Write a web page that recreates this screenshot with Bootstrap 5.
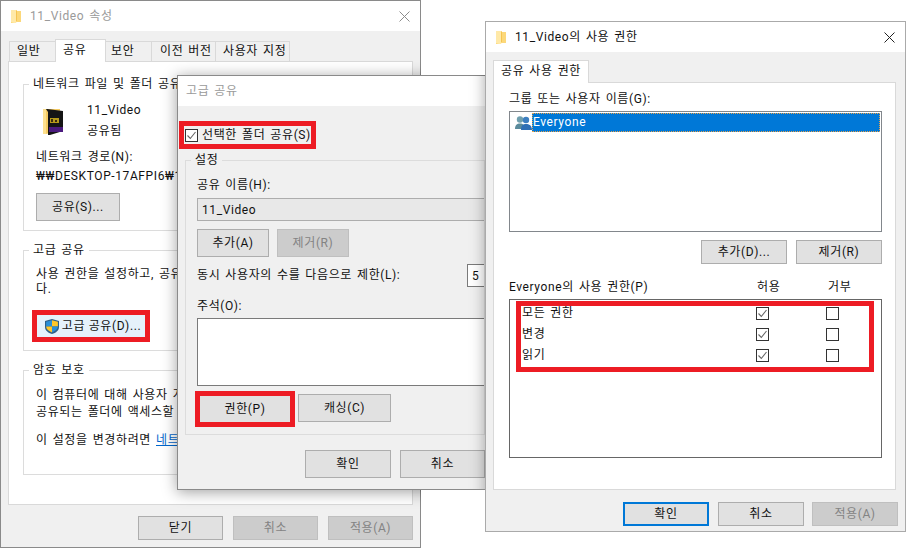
<!DOCTYPE html>
<html lang="ko">
<head>
<meta charset="utf-8">
<title>11_Video</title>
<link href="https://cdn.jsdelivr.net/npm/bootstrap@5.3.0/dist/css/bootstrap.min.css" rel="stylesheet">
<style>
html,body{margin:0;height:549px;overflow:hidden;background:#fff}
body{font-family:Roboto,"Noto Sans CJK KR",sans-serif;font-size:12px;line-height:17px;color:#111;letter-spacing:.6px;word-spacing:1.5px}
.canvas{position:relative;width:906px;height:549px;overflow:hidden}
.win{position:absolute;background:#f0f0f0;border:1px solid #8a8a8a;box-sizing:border-box}
.win-a{left:0;top:0;width:421px;height:548px;z-index:1}
.win-b{left:177px;top:75px;width:320px;height:415px;z-index:2;box-shadow:0 2px 14px rgba(0,0,0,.38);clip-path:polygon(-24px -24px,244px -24px,244px 0,100% 0,100% 100%,244px 100%,244px calc(100% + 24px),-24px calc(100% + 24px))}
.win-c{left:485px;top:21px;width:421px;height:511px;z-index:3;border-color:#aaa;box-shadow:0 0 14px rgba(0,0,0,.34);clip-path:polygon(0 0,100% 0,100% 100%,0 100%,0 468px,-24px 468px,-24px 54px,0 54px)}
.win-title{height:30px;background:#fff;padding-left:10px;color:#9a9a9a;white-space:nowrap}
.win-c .win-title{color:#111;height:30px}
.title-txt{margin-left:9px}
.win-b .title-txt{margin-left:-2px}
.win-x{margin-left:auto;margin-right:10px}
.tab-row{border-bottom:0;padding-left:9px;margin-top:8px;height:22px;flex-wrap:nowrap;align-items:flex-end}
.tab-row .nav-link{border:1px solid #d9d9d9;border-bottom:0;border-radius:0;margin:0;padding:0;height:20px;line-height:18px;color:#111;background:#f0f0f0;text-align:left;white-space:nowrap;margin-left:-1px}
.tab-row .nav-link.active{height:23px;line-height:20px;background:#fff;color:#111;border-color:#d9d9d9;position:relative;z-index:1;margin-bottom:-1px}
.tab-row .tw-a{width:47px;padding-left:7px}.tab-row .tw-b{width:51px;padding-left:7px}.tab-row .tw-c{width:47px;padding-left:5px}.tab-row .tw-d{width:65px;padding-left:8px}.tab-row .tw-e{width:75px;padding-left:7px}.tab-row .tw-f{width:96px;padding-left:7px}
.sheet{background:#fff;border:1px solid #d9d9d9;box-sizing:border-box}
.win-a .sheet{margin-left:7px;width:405px;height:444px;padding:14px 14px 0}
.win-c .sheet{margin:0 0 0 7px;width:403px;height:408px;padding:8px 13px 0 15px}
.grp{border:1px solid #dcdcdc;margin:0;padding:0 12px;min-width:0;overflow:hidden;white-space:nowrap;box-sizing:border-box}
.grp legend{float:none;width:auto;font-size:12px;line-height:17px;margin:0 0 0 -7px;padding:0 4px;letter-spacing:.6px}
.grp-a{height:155px}
.grp-b{height:109px;margin-top:11px}
.grp-c{height:113px;margin-top:11px}
.wbtn{--bs-btn-padding-x:0;--bs-btn-padding-y:0;--bs-btn-font-size:12px;--bs-btn-line-height:1;--bs-btn-border-radius:0;--bs-btn-border-width:1px;--bs-btn-bg:#e1e1e1;--bs-btn-border-color:#adadad;--bs-btn-color:#111;--bs-btn-disabled-bg:#ccc;--bs-btn-disabled-border-color:#bfbfbf;--bs-btn-disabled-color:#838383;--bs-btn-disabled-opacity:1;height:24px;width:86px;letter-spacing:.6px;display:inline-flex;align-items:center;justify-content:center;flex:none}
.wbtn-h28{height:28px}
.w-84{width:84px}.w-72{width:72px}.w-93{width:93px}.w-85{width:85px}
.wbtn-main{--bs-btn-border-color:#0078d7;border-width:2px;margin-right:1px}
.wbtn-blue{--bs-btn-bg:#e5f1fb;--bs-btn-border-color:#e5f1fb;width:108px;height:22px;gap:3px;padding-left:4px}
.wbtn-red{--bs-btn-border-color:#e1e1e1;width:90px;height:26px}
.foot{padding-right:7px;gap:8px}
.win-a .foot{margin-top:11px;gap:10px;padding-right:7px}
.win-c .foot{margin-top:12px;padding-right:7px}
.hl{border:5px solid #ed1c24;box-sizing:border-box}
.hl-a{width:118px;height:32px;margin:13px 0 0 -4px}
.hl-b{width:137px;height:28px;margin:15px 0 0 1px;padding-left:1px;gap:4px}
.hl-c{width:100px;height:36px;flex:none}
.hl-d{width:358px;height:71px;margin:1px 0 0 6px;padding:0 0 0 1px;gap:7px}
.row-perm{height:14px;line-height:14px}
.lbl-perm{width:234px;flex:none}
.wchk[type=checkbox]{width:13px;height:13px;margin:0;flex:none;border:1px solid #333;border-radius:0;background-size:11px 11px}
.wchk[type=checkbox]:disabled{opacity:1}
.wchk[type=checkbox]:checked{background-color:#fff;border-color:#333;background-image:url("data:image/svg+xml,%3csvg xmlns='http://www.w3.org/2000/svg' viewBox='0 0 11 11'%3e%3cpath fill='none' stroke='%23666' stroke-width='1.1' d='M1.5 5.5l2.800 3 5.200-6.500'/%3e%3c/svg%3e")}
.gap-57{gap:57px}
.mt-9{margin-top:9px}.mt-11{margin-top:11px}.mt-8{margin-top:8px}.mt-7{margin-top:7px}.mt-4x{margin-top:4px}.mt-3x{margin-top:3px}.mt-2x{margin-top:2px}
.lh-15{line-height:15px}
.bigfold{margin:6px 0 0 7px;flex:none}
.gap-24{gap:24px}
.link-net{color:#0066cc;text-decoration:underline}
.grp-set{height:283px;margin:3px 0 0 7px;width:300px;padding:0 11px}
.grp-set legend{margin-left:-6px}
.fld{display:block;height:23px;border:1px solid #adadad;background:#e8e8e8;border-radius:0;font-size:12px;padding:0 4px;color:#111;width:288px;letter-spacing:.6px;box-shadow:none;outline:0}
.fld-num{width:40px;background:#fff;border-color:#7a7a7a;flex:none}
.lbl-lim{width:270px;flex:none}
.area{height:68px;width:288px;border:1px solid #7a7a7a;background:#fff;margin-top:3px;resize:none;border-radius:0;padding:0;display:block}
.btn-row{margin:5px 0 0 -2px;gap:3px}
.foot-b{margin:15px 0 0 127px;gap:9px}
.win-c .tab-row{margin-top:7px;padding-left:8px;height:23px}
.box{border:1px solid #82878c;background:#fff;width:373px;box-sizing:border-box}
.box-a{height:121px;margin-top:3px;padding:1px 1px 0 5px;gap:0}
.box-b{height:159px;margin-top:3px;border-color:#666;display:block;padding:0}
.sel{height:19px;flex:1;background:#0078d7;color:#fff;outline:1px dotted #e8a14a;outline-offset:-1px;line-height:19px;padding-left:1px;margin-left:0}
.users{flex:none;margin-top:3px}
.head-perm{margin-top:15px;height:17px}
.hp-a{width:248px}.hp-b{width:71px}
.btns-list{margin-top:8px;gap:9px}
</style>
</head>
<body>
<div class="canvas">

<section class="win win-a">
  <div class="win-title d-flex align-items-center">
    <svg width="10" height="13" viewBox="0 0 10 13"><path fill="#fcd87a" d="M0 0h6v1h4v11H6l-3 1H0z"/><path fill="#f5c451" d="M5 1h1v10H5z"/><path fill="#ffe9a8" d="M0 0h5v13H3L0 12z"/></svg>
    <span class="title-txt">11_Video 속성</span>
    <svg class="win-x" width="11" height="11" viewBox="0 0 11 11"><path stroke="#8c8c8c" fill="none" d="M.5.5l10 10M10.5.5l-10 10"/></svg>
  </div>
  <ul class="nav nav-tabs tab-row">
    <li class="nav-item"><a class="nav-link tw-a" href="#">일반</a></li>
    <li class="nav-item"><a class="nav-link active tw-b" href="#">공유</a></li>
    <li class="nav-item"><a class="nav-link tw-c" href="#">보안</a></li>
    <li class="nav-item"><a class="nav-link tw-d" href="#">이전 버전</a></li>
    <li class="nav-item"><a class="nav-link tw-e" href="#">사용자 지정</a></li>
  </ul>
  <div class="sheet">
    <fieldset class="grp grp-a">
      <legend>네트워크 파일 및 폴더 공유</legend>
      <div class="d-flex gap-24 mt-9">
        <svg class="bigfold" width="20" height="27" viewBox="0 0 20 27"><path fill="#fde08f" d="M0 1h3v25H0z"/><path fill="#f6cb62" d="M3 1h14v21L3 26z"/><path fill="#151515" d="M3 1h1l16 2v20L7 27H5V4z"/><path fill="#b59a1a" d="M7 10h9v5H7z"/><path fill="#3a2a10" d="M8 11h2v3H8zM12 12h2v2h-2z"/><path fill="#4a1a7e" d="M6 19h14v5H6z"/></svg>
        <div>
          <div>11_Video</div>
          <div class="mt-4x">공유됨</div>
        </div>
      </div>
      <div class="mt-9">네트워크 경로(N):</div>
      <div class="mt-2x">₩₩DESKTOP-17AFPI6₩11</div>
      <button type="button" class="btn wbtn wbtn-h28 w-84 mt-8">공유(S)...</button>
    </fieldset>
    <fieldset class="grp grp-b">
      <legend>고급 공유</legend>
      <div class="lh-15 mt-8">사용 권한을 설정하고, 공유<br>다.</div>
      <div class="hl hl-a">
        <button type="button" class="btn wbtn wbtn-blue">
          <svg width="14" height="15" viewBox="0 0 14 15"><path fill="#2f5f86" d="M7 0l7 2v6c0 3.500-3 5.800-7 7C3 13.800 0 11.500 0 8V2z"/><path fill="#2a8fd8" d="M7 1.200v6.300H1.100V2.800z"/><path fill="#ffc628" d="M7 1.200l5.900 1.600v4.700H7zM7 7.500H1.100c.2 2.700 2.600 4.600 5.900 6z"/><path fill="#2a8fd8" d="M7 7.500h5.900c-.2 2.700-2.600 4.600-5.900 6z"/></svg>
          <span>고급 공유(D)...</span>
        </button>
      </div>
    </fieldset>
    <fieldset class="grp grp-c">
      <legend>암호 보호</legend>
      <div class="mt-8">이 컴퓨터에 대해 사용자 계<br>공유되는 폴더에 액세스할</div>
      <div class="mt-11">이 설정을 변경하려면 <a class="link-net" href="#">네트</a></div>
    </fieldset>
  </div>
  <div class="d-flex justify-content-end foot">
    <button type="button" class="btn wbtn w-85">닫기</button>
    <button type="button" class="btn wbtn w-85" disabled>취소</button>
    <button type="button" class="btn wbtn w-85" disabled>적용(A)</button>
  </div>
</section>

<section class="win win-b">
  <div class="win-title d-flex align-items-center"><span class="title-txt">고급 공유</span></div>
  <label class="hl hl-b d-flex align-items-center">
    <input class="form-check-input wchk" type="checkbox" checked>
    <span>선택한 폴더 공유(S)</span>
  </label>
  <fieldset class="grp grp-set">
    <legend>설정</legend>
    <div class="mt-8">공유 이름(H):</div>
    <input class="form-control fld mt-4x" value="11_Video" aria-label="공유 이름">
    <div class="d-flex mt-8 gap-2">
      <button type="button" class="btn wbtn wbtn-h28 w-72">추가(A)</button>
      <button type="button" class="btn wbtn wbtn-h28 w-72" disabled>제거(R)</button>
    </div>
    <div class="d-flex align-items-center mt-7">
      <span class="lbl-lim">동시 사용자의 수를 다음으로 제한(L):</span>
      <input class="form-control fld fld-num" value="5" aria-label="제한">
    </div>
    <div class="mt-11">주석(O):</div>
    <textarea class="form-control area" aria-label="주석"></textarea>
    <div class="d-flex btn-row">
      <div class="hl hl-c"><button type="button" class="btn wbtn wbtn-red">권한(P)</button></div>
      <button type="button" class="btn wbtn wbtn-h28 w-93 mt-3x">캐싱(C)</button>
    </div>
  </fieldset>
  <div class="d-flex foot-b">
    <button type="button" class="btn wbtn wbtn-h28">확인</button>
    <button type="button" class="btn wbtn wbtn-h28 w-85">취소</button>
  </div>
</section>

<section class="win win-c">
  <div class="win-title d-flex align-items-center">
    <svg width="10" height="13" viewBox="0 0 10 13"><path fill="#fcd87a" d="M0 0h6v1h4v11H6l-3 1H0z"/><path fill="#f5c451" d="M5 1h1v10H5z"/><path fill="#ffe9a8" d="M0 0h5v13H3L0 12z"/></svg>
    <span class="title-txt">11_Video의 사용 권한</span>
    <svg class="win-x" width="11" height="11" viewBox="0 0 11 11"><path stroke="#222" fill="none" d="M.5.5l10 10M10.500.5l-10 10"/></svg>
  </div>
  <ul class="nav nav-tabs tab-row">
    <li class="nav-item"><a class="nav-link active tw-f" href="#">공유 사용 권한</a></li>
  </ul>
  <div class="sheet">
    <div>그룹 또는 사용자 이름(G):</div>
    <div class="box box-a d-flex align-items-start">
      <svg class="users" width="17" height="14" viewBox="0 0 17 14"><circle cx="5" cy="3.500" r="3.200" fill="#6f9fae"/><path fill="#5b8b9c" d="M0 13c0-4 2-5.500 5-5.500S10 9 10 13z"/><circle cx="11" cy="4" r="3.200" fill="#3d7fc0"/><path fill="#2f6fb5" d="M6 14c0-4.500 2-6 5-6s6 1.500 6 6z"/></svg>
      <div class="sel">Everyone</div>
    </div>
    <div class="d-flex justify-content-end btns-list">
      <button type="button" class="btn wbtn">추가(D)...</button>
      <button type="button" class="btn wbtn">제거(R)</button>
    </div>
    <div class="d-flex head-perm">
      <span class="hp-a">Everyone의 사용 권한(P)</span>
      <span class="hp-b">허용</span>
      <span>거부</span>
    </div>
    <div class="box box-b">
      <div class="hl hl-d d-flex flex-column">
        <div class="d-flex align-items-center row-perm"><span class="lbl-perm">모든 권한</span><div class="d-flex gap-57"><input class="form-check-input wchk" type="checkbox" checked disabled aria-label="모든 권한 허용"><input class="form-check-input wchk" type="checkbox" disabled aria-label="모든 권한 거부"></div></div>
        <div class="d-flex align-items-center row-perm"><span class="lbl-perm">변경</span><div class="d-flex gap-57"><input class="form-check-input wchk" type="checkbox" checked disabled aria-label="변경 허용"><input class="form-check-input wchk" type="checkbox" disabled aria-label="변경 거부"></div></div>
        <div class="d-flex align-items-center row-perm"><span class="lbl-perm">읽기</span><div class="d-flex gap-57"><input class="form-check-input wchk" type="checkbox" checked disabled aria-label="읽기 허용"><input class="form-check-input wchk" type="checkbox" disabled aria-label="읽기 거부"></div></div>
      </div>
    </div>
  </div>
  <div class="d-flex justify-content-end foot">
    <button type="button" class="btn wbtn wbtn-main">확인</button>
    <button type="button" class="btn wbtn">취소</button>
    <button type="button" class="btn wbtn" disabled>적용(A)</button>
  </div>
</section>

</div>
</body>
</html>
